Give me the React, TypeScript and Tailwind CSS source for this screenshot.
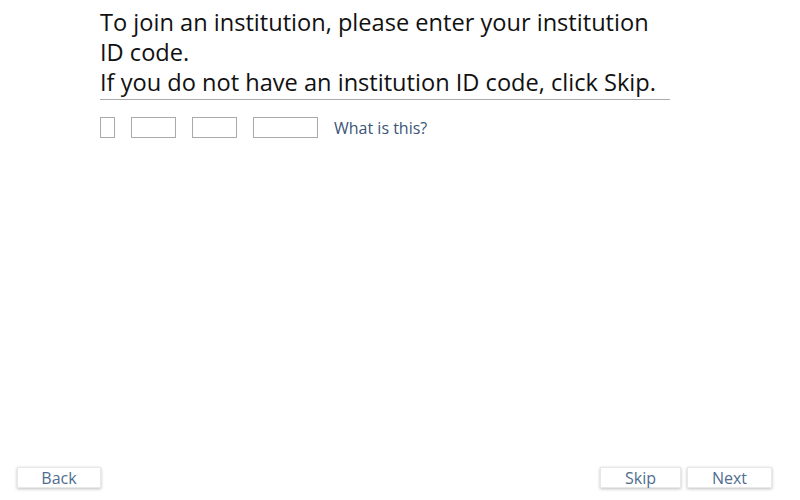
import React from "react";

export default function App() {
  const font = { fontFamily: '"Open Sans", sans-serif' };
  return (
    <div className="w-[800px] h-[500px] bg-white relative flex flex-col" style={font}>
      <div className="flex-1 pl-[100px] pt-[7px]">
        <div className="w-[570px] border-b border-[#aaaaaa] pb-[2px]">
          <p className="text-[23.6px] leading-[30px] text-[#111111]">
            To join an institution, please enter your institution ID code.
            <br />
            If you do not have an institution ID code, click Skip.
          </p>
        </div>
        <div className="flex items-start gap-[16px] mt-[17px]">
          <input className="w-[15px] h-[21px] border border-[#aaaaaa] outline-none" />
          <input className="w-[45px] h-[21px] border border-[#aaaaaa] outline-none" />
          <input className="w-[45px] h-[21px] border border-[#aaaaaa] outline-none" />
          <input className="w-[65px] h-[21px] border border-[#aaaaaa] outline-none" />
          <span className="text-[16px] leading-[21px] pt-[1px] text-[#3b5577]">What is this?</span>
        </div>
      </div>
      <div className="flex justify-between items-center px-[17px] pb-[12px]">
        <button className="w-[84px] h-[21px] bg-white border border-[#e8e8e8] shadow-[0_1px_3px_rgba(0,0,0,0.25)] text-[16px] leading-[19px] pt-[1px] text-[#4f6d8f]">
          Back
        </button>
        <div className="flex gap-[6px] mr-[11px]">
          <button className="w-[81px] h-[21px] bg-white border border-[#e8e8e8] shadow-[0_1px_3px_rgba(0,0,0,0.25)] text-[16px] leading-[19px] pt-[1px] text-[#4f6d8f]">
            Skip
          </button>
          <button className="w-[85px] h-[21px] bg-white border border-[#e8e8e8] shadow-[0_1px_3px_rgba(0,0,0,0.25)] text-[16px] leading-[19px] pt-[1px] text-[#4f6d8f]">
            Next
          </button>
        </div>
      </div>
    </div>
  );
}
